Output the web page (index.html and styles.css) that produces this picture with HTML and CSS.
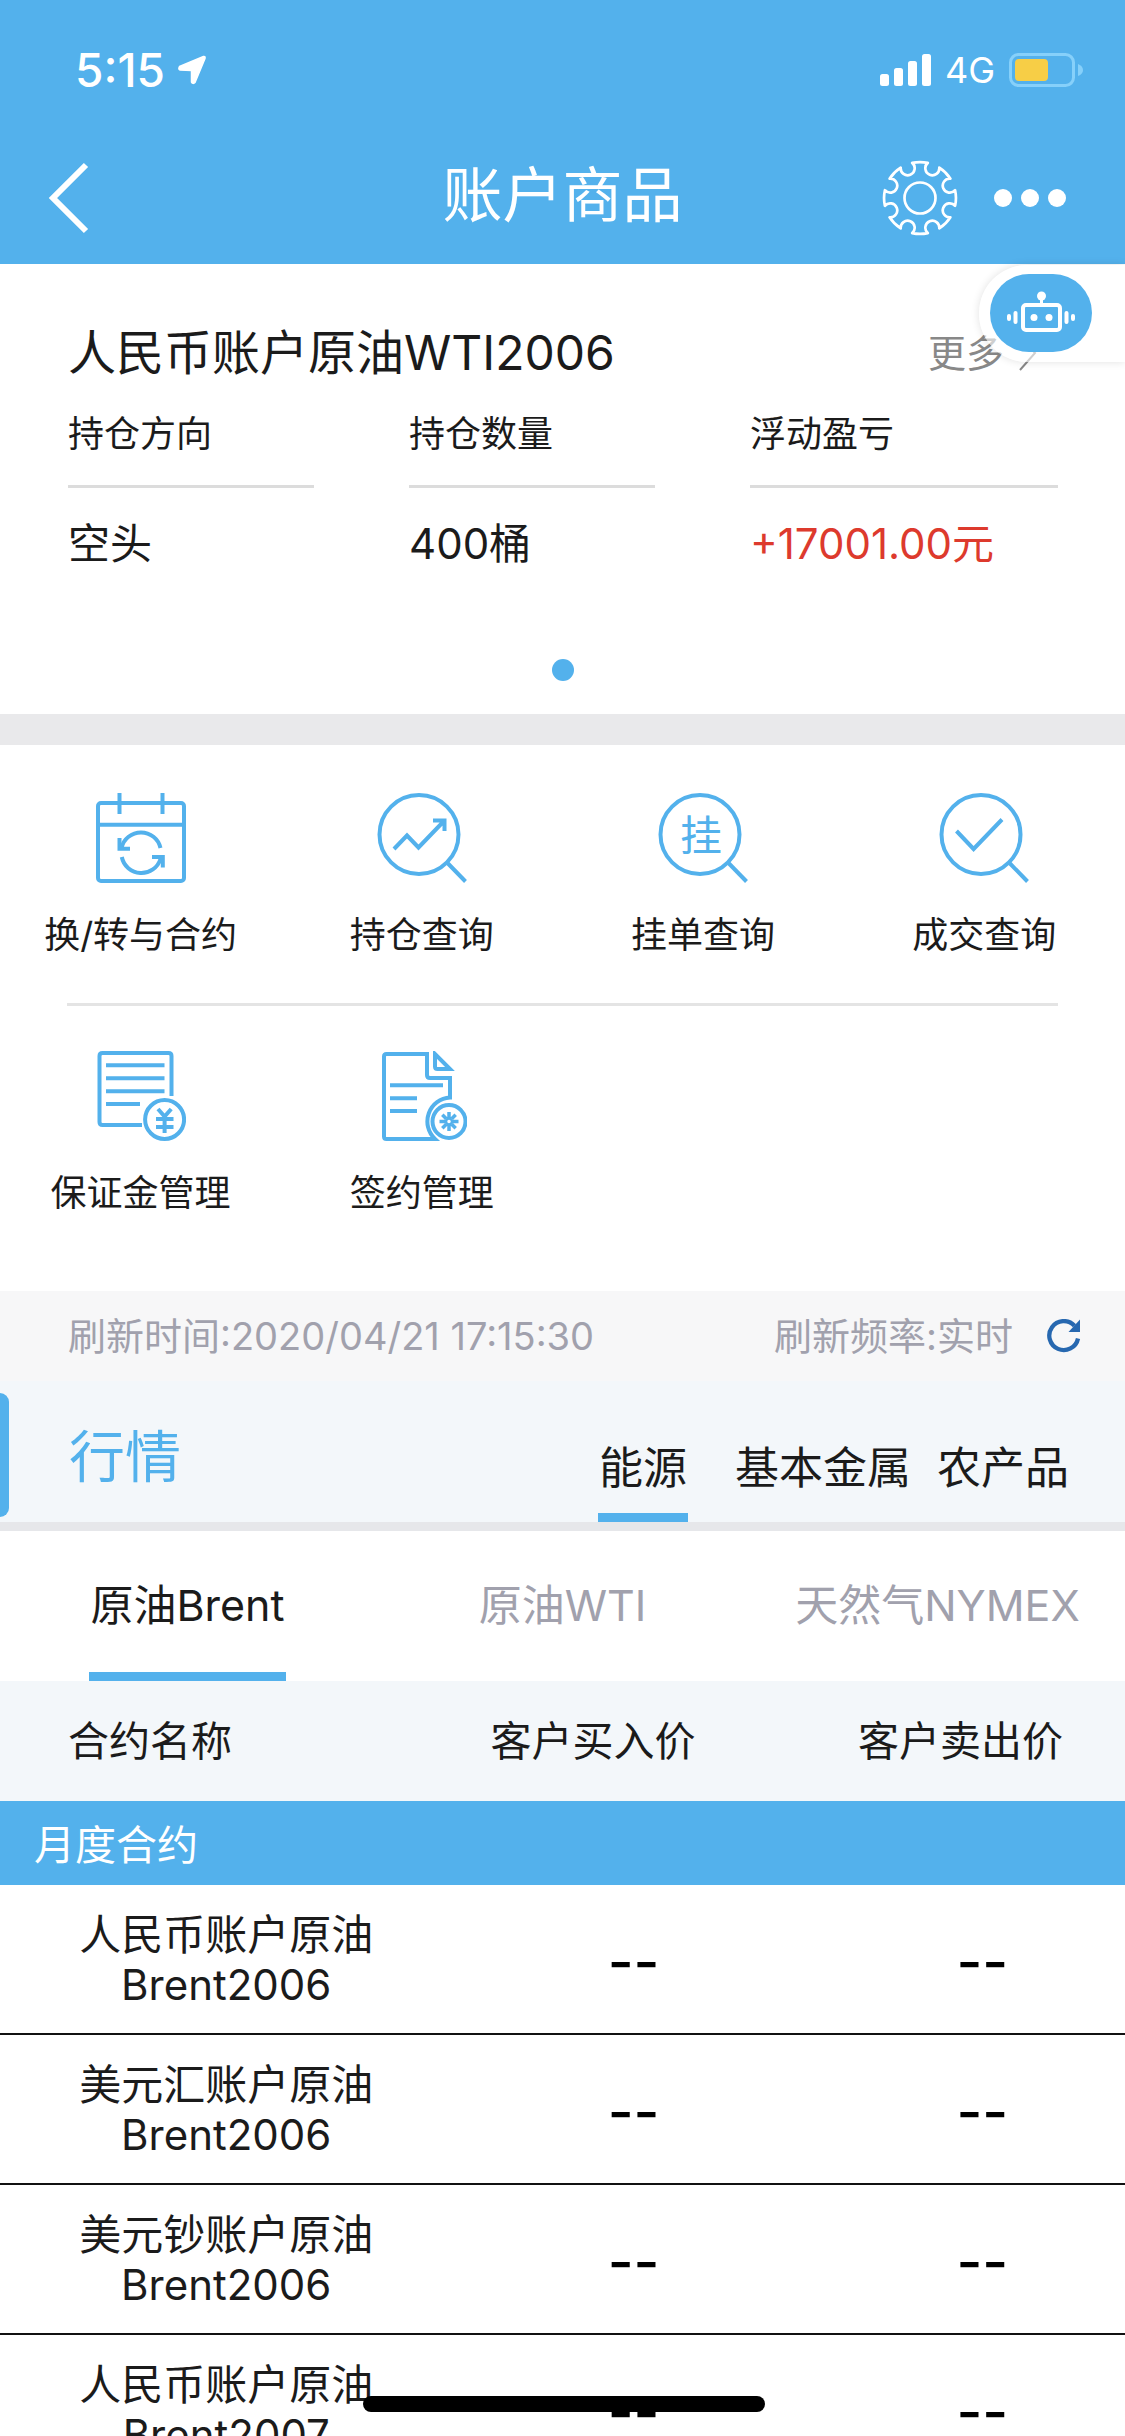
FILE: index.html
```html
<!DOCTYPE html>
<html lang="zh-CN">
<head>
<meta charset="utf-8">
<meta name="viewport" content="width=device-width, initial-scale=1">
<title>账户商品</title>
<link rel="stylesheet" href="styles.css">
</head>
<body>
<div class="app">
  <header class="top">
    <div class="status">
      <div class="status-side">
        <span class="clock">5:15</span>
        <svg class="locate" viewBox="0 0 30 30" aria-hidden="true"><path d="M26.500 1.500 2.500 11.500Q1 14.500 3 15L14.500 15.500V27Q16 29.500 18 27.500L28 3.500Q28.500 1 26.500 1.500Z" fill="#fff" stroke="#fff" stroke-width="1.500" stroke-linejoin="round"/></svg>
      </div>
      <div class="status-side status-right">
        <svg class="signal" viewBox="0 0 51 32" aria-hidden="true" fill="#fff"><rect x="0" y="20" width="9" height="12" rx="2.500"/><rect x="14" y="14" width="9" height="18" rx="2.500"/><rect x="28" y="7" width="9" height="25" rx="2.500"/><rect x="42" y="0" width="9" height="32" rx="2.500"/></svg>
        <span class="network">4G</span>
        <svg class="battery" viewBox="0 0 74 34" aria-hidden="true"><rect x="1.500" y="1.500" width="63" height="31" rx="8" fill="none" stroke="#86d0fa" stroke-width="3"/><rect x="6" y="6" width="33" height="22" rx="4" fill="#f7ce46"/><path d="M69 11q5 2 5 6t-5 6z" fill="#86d0fa"/></svg>
      </div>
    </div>
    <nav class="nav">
      <button class="icon-btn" type="button" aria-label="返回"><svg class="back" viewBox="0 0 42 72"><path d="M38 3 5 36 38 69" fill="none" stroke="#fff" stroke-width="6"/></svg></button>
      <h1 class="title">账户商品</h1>
      <div class="nav-actions">
        <button class="icon-btn" type="button" aria-label="设置"><svg class="gear" viewBox="-38 -38 76 76" fill="none" stroke="#fff" stroke-width="2.700" stroke-linejoin="round"><path d="M-7.800-35.100A36 36 0 0 1 7.800-35.100A7 7 0 1 0 19.300-30.400A36 36 0 0 1 30.400-19.300A7 7 0 1 0 35.100-7.800A36 36 0 0 1 35.100 7.800A7 7 0 1 0 30.400 19.300A36 36 0 0 1 19.300 30.400A7 7 0 1 0 7.800 35.100A36 36 0 0 1-7.800 35.100A7 7 0 1 0-19.300 30.400A36 36 0 0 1-30.400 19.300A7 7 0 1 0-35.100 7.800A36 36 0 0 1-35.100-7.800A7 7 0 1 0-30.400-19.300A36 36 0 0 1-19.300-30.400A7 7 0 1 0-7.800-35.100Z"/><circle r="15.500"/></svg></button>
        <button class="icon-btn" type="button" aria-label="更多选项"><svg class="dots" viewBox="0 0 74 18" fill="#fff"><circle cx="10" cy="9" r="9"/><circle cx="37" cy="9" r="9"/><circle cx="64" cy="9" r="9"/></svg></button>
      </div>
    </nav>
  </header>

  <main>
    <section class="account">
      <button class="robot" type="button" aria-label="智能客服">
        <span class="robot-face"><svg viewBox="0 0 70 44" fill="none" stroke="#fff" stroke-linecap="round"><rect x="17" y="14" width="37" height="25" rx="3" stroke-width="4"/><path d="M35.500 6v8" stroke-width="3"/><circle cx="35.500" cy="5" r="4.500" fill="#fff" stroke="none"/><g fill="#fff" stroke="none"><circle cx="28" cy="26.500" r="3.500"/><circle cx="43" cy="26.500" r="3.500"/></g><path d="M9.500 22v9M60.500 22v9" stroke-width="4"/><path d="M3 25v3M67 25v3" stroke-width="4"/></svg></span>
      </button>
      <div class="account-head">
        <h2 class="account-name">人民币账户原油WTI2006</h2>
        <a class="more" href="#">更多<svg class="more-arrow" viewBox="0 0 20 38"><path d="M2 2 17 19 2 36" fill="none" stroke="#888" stroke-width="2"/></svg></a>
      </div>
      <dl class="figures">
        <div><dt>持仓方向</dt><dd>空头</dd></div>
        <div><dt>持仓数量</dt><dd>400桶</dd></div>
        <div><dt>浮动盈亏</dt><dd class="gain">+17001.00元</dd></div>
      </dl>
      <span class="pager"></span>
    </section>

    <nav class="menu">
      <div class="menu-row">
        <a class="menu-item" href="#"><svg class="menu-icon" viewBox="0 0 90 90"><rect x="2" y="10" width="86" height="78" rx="3"/><path d="M23.500 0v21M66.500 0v21M2 31.700h86"/><path d="M25.500 55A20 20 0 0 1 64.500 55M25.800 64A20 20 0 0 0 64.500 66"/><path d="M23.500 45v10.800H34M56 64h10.800v10.500"/></svg>换/转与合约</a>
        <a class="menu-item" href="#"><svg class="menu-icon" viewBox="0 0 90 90"><circle cx="42" cy="41.500" r="39.500"/><path d="M70 69.500 88.500 88.500M17 56 30 42.500 41.500 54.500 67 28M56 27.500h11.500V38"/></svg>持仓查询</a>
        <a class="menu-item" href="#"><svg class="menu-icon" viewBox="0 0 90 90"><circle cx="42" cy="41.500" r="39.500"/><path d="M70 69.500 88.500 88.500"/><text class="glyph" x="43" y="58" text-anchor="middle">挂</text></svg>挂单查询</a>
        <a class="menu-item" href="#"><svg class="menu-icon" viewBox="0 0 90 90"><circle cx="42" cy="41.500" r="39.500"/><path d="M70 69.500 88.500 88.500M17.500 38 34.600 56 63 26.500"/></svg>成交查询</a>
      </div>
      <div class="menu-row">
        <a class="menu-item" href="#"><svg class="menu-icon" viewBox="0 0 90 90"><path d="M75.500 45V5q0-3-3-3h-66q-3 0-3 3v66q0 3 3 3H46M10 14.300h58.500M10 27.300h58.500M10 40.300h58.500M10 53h34"/><circle cx="68.600" cy="68.500" r="19.500"/><path d="M62 58l6.600 7.500 6.600-7.500M60 68h17.500M60 76h17.500M68.600 64v18"/></svg>保证金管理</a>
        <a class="menu-item" href="#"><svg class="menu-icon" viewBox="0 0 90 90"><path d="M50 3H9.500Q7 3 7 5.500v80q0 2.500 2.500 2.500H58A24 24 0 0 1 73 46.500V27H53q-3 0-3-3ZM58 3v12.500q0 2.500 2.500 2.500H73ZM13 34.300h53M13 47.300h27M13 60h27"/><circle cx="72" cy="70.500" r="16.500"/><path stroke-width="3.500" d="M72 61v6M72 74v6M62.500 70.500h6M75.500 70.500h6M65.300 63.800l4 4M74.700 73.200l4 4M78.700 63.800l-4 4M69.300 73.200l-4 4"/><circle cx="72" cy="70.500" r="3" stroke-width="2.500"/></svg>签约管理</a>
      </div>
    </nav>

    <section class="quotes">
      <div class="refresh">
        <span>刷新时间:2020/04/21 17:15:30</span>
        <span class="rate">刷新频率:实时</span>
        <button class="icon-btn" type="button" aria-label="刷新"><svg class="reload" viewBox="0 0 34 34"><path d="M27.500 6.800A14.500 14.500 0 1 0 31 19.500" fill="none" stroke="#2768b0" stroke-width="4.300"/><path d="M33 0.500V13H21.500z" fill="#2768b0"/></svg></button>
      </div>
      <div class="market">
        <span class="accent"></span>
        <h2 class="market-title">行情</h2>
        <div class="sectors">
          <button class="tab active" type="button">能源</button>
          <button class="tab" type="button">基本金属</button>
          <button class="tab" type="button">农产品</button>
        </div>
      </div>
      <div class="products">
        <button class="tab active" type="button">原油Brent</button>
        <button class="tab" type="button">原油WTI</button>
        <button class="tab" type="button">天然气NYMEX</button>
      </div>
      <table class="prices">
        <thead>
          <tr><th class="col-name" scope="col">合约名称</th><th class="col-buy" scope="col">客户买入价</th><th class="col-sell" scope="col">客户卖出价</th></tr>
        </thead>
        <tbody>
          <tr><th class="group" colspan="3" scope="rowgroup">月度合约</th></tr>
          <tr><td class="name">人民币账户原油<br>Brent2006</td><td class="price">--</td><td class="price">--</td></tr>
          <tr><td class="name">美元汇账户原油<br>Brent2006</td><td class="price">--</td><td class="price">--</td></tr>
          <tr><td class="name">美元钞账户原油<br>Brent2006</td><td class="price">--</td><td class="price">--</td></tr>
          <tr><td class="name">人民币账户原油<br>Brent2007</td><td class="price">--</td><td class="price">--</td></tr>
        </tbody>
      </table>
    </section>
  </main>
  <div class="home-bar"></div>
</div>
</body>
</html>
```
FILE: styles.css
```css
:root {
  --blue: #53b1ec;
  --ink: #1b1b1b;
  --muted: #a1a1ad;
  --pale: #f3f7fa;
}

* { box-sizing: border-box; }

body, h1, h2, dl, dd { margin: 0; }

body {
  background: #fff;
  color: var(--ink);
  font-family: Inter, "Noto Sans CJK SC", sans-serif;
  font-weight: 400;
}

h1, h2, th { font-weight: 400; }

a { color: inherit; text-decoration: none; }

button {
  margin: 0;
  padding: 0;
  border: 0;
  background: none;
  color: inherit;
  font: inherit;
}

svg { display: block; flex: none; }

.app { height: 100vh; overflow: hidden; }

.icon-btn { display: flex; align-items: center; }

/* Header */
.top { background: var(--blue); color: #fff; }

.status {
  display: flex;
  justify-content: space-between;
  height: 132px;
  padding: 8px 42px 0 75px;
}

.status-side { display: flex; align-items: center; gap: 12px; }
.status-right { gap: 14px; }
.clock { font-size: 46px; font-weight: 500; line-height: 48px; }
.network { font-size: 36px; line-height: 40px; }
.locate { width: 30px; height: 30px; }
.signal { width: 51px; height: 32px; }
.battery { width: 74px; height: 34px; }

.nav {
  display: grid;
  grid-template-columns: 1fr auto 1fr;
  align-items: center;
  height: 132px;
  padding: 0 48px;
}

.back { width: 42px; height: 72px; }
.title { padding-bottom: 6px; font-size: 60px; line-height: 72px; }
.nav-actions { display: flex; justify-content: flex-end; align-items: center; gap: 35px; margin-right: 10px; }
.gear { width: 76px; height: 76px; }
.dots { width: 74px; height: 18px; }

/* Account card */
.account {
  position: relative;
  padding: 59px 67px 33px 68px;
  border-bottom: 31px solid #e9e9eb;
}

.robot {
  position: absolute;
  top: 1px;
  right: 0;
  width: 146px;
  padding: 9px 33px 10px 11px;
  border-radius: 48px 0 0 48px;
  background: rgba(255, 255, 255, 0.6);
  box-shadow: 0 0 8px rgba(0, 0, 0, 0.12);
}

.robot-face {
  display: flex;
  justify-content: center;
  align-items: center;
  height: 78px;
  border-radius: 39px;
  background: var(--blue);
}

.robot-face svg { width: 70px; height: 44px; }

.account-head { display: flex; justify-content: space-between; align-items: center; }
.account-name { font-size: 48px; line-height: 60px; }
.more { display: flex; align-items: center; gap: 14px; margin-right: 20px; color: #888; font-size: 38px; line-height: 48px; }
.more-arrow { width: 20px; height: 38px; }

.figures {
  display: grid;
  grid-template-columns: 246fr 246fr 308fr;
  gap: 95px;
  margin-top: 26px;
}

.figures dt { padding-bottom: 26px; border-bottom: 3px solid #dcdcdc; font-size: 36px; line-height: 50px; }
.figures dd { padding-top: 28px; font-size: 42px; line-height: 56px; }
.figures .gain { color: #dd3a2d; }

.pager {
  display: block;
  width: 22px;
  height: 22px;
  margin: 87px auto 0;
  border-radius: 50%;
  background: var(--blue);
}

/* Shortcuts */
.menu { padding-bottom: 73px; }

.menu-row { display: grid; grid-template-columns: repeat(4, 1fr); padding-top: 45px; }
.menu-row:first-child { padding-top: 48px; }
.menu-row:first-child::after {
  content: "";
  grid-column: 1 / -1;
  height: 3px;
  margin: 43px 67px 0;
  background: #e4e4e4;
}

.menu-item {
  display: flex;
  flex-direction: column;
  align-items: center;
  gap: 27px;
  font-size: 36px;
  line-height: 50px;
  white-space: nowrap;
}

.menu-icon { width: 90px; height: 90px; fill: none; stroke: var(--blue); stroke-width: 4; }
.glyph { fill: var(--blue); stroke: none; font-size: 42px; }

/* Quotes */
.refresh {
  display: flex;
  align-items: center;
  height: 90px;
  padding: 0 44px 0 68px;
  background: #f7f7f8;
  color: var(--muted);
  font-size: 38px;
  line-height: 50px;
}

.rate { margin: 0 34px 0 auto; }
.reload { width: 34px; height: 34px; }

.market {
  display: grid;
  grid-template-columns: 69px 1fr 540px;
  height: 150px;
  padding-right: 32px;
  border-bottom: 9px solid #e6e7ea;
  background: var(--pale);
}

.accent { width: 9px; margin: 12px 0 5px; border-radius: 0 9px 9px 0; background: var(--blue); }
.market-title { align-self: center; padding-top: 10px; color: var(--blue); font-size: 56px; line-height: 64px; }

.sectors, .products { display: grid; grid-template-columns: repeat(3, 1fr); justify-items: center; }

.tab {
  padding: 0 1px;
  border-bottom: 9px solid transparent;
  font-size: 44px;
  line-height: 50px;
  white-space: nowrap;
}

.tab.active { border-color: var(--blue); }
.sectors .tab { padding-top: 42px; }

.products { height: 150px; color: var(--muted); }
.products .tab { padding-top: 6px; font-size: 43px; }
.products .active { color: var(--ink); }

.prices { width: 100%; border-spacing: 0; table-layout: fixed; text-align: center; }
.prices th, .prices td { padding: 0; }
.prices thead th { height: 120px; background: var(--pale); font-size: 41px; line-height: 50px; text-align: left; }
.prices .col-name { width: 38%; padding-left: 68px; }
.prices .col-buy { width: 37%; padding-left: 63px; }
.prices .col-sell { width: 25%; padding-right: 62px; text-align: right; }
.prices .group { height: 84px; padding: 4px 0 0 34px; background: var(--blue); color: #fff; font-size: 41px; line-height: 50px; text-align: left; }
.prices td { height: 150px; border-bottom: 2px solid #111; font-size: 42px; line-height: 50px; }
.prices .name { padding: 2px 0 0 25px; }
.prices .price { padding: 6px 4px 0 0; color: #000; font-size: 56px; font-weight: 500; }

.home-bar {
  position: fixed;
  bottom: 24px;
  left: 50%;
  width: 402px;
  height: 16px;
  margin-left: -200px;
  border-radius: 8px;
  background: #000;
}
```
